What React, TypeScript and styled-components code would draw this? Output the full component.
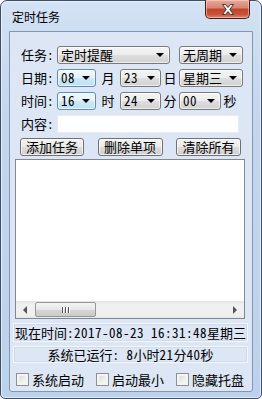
import styled, { createGlobalStyle } from "styled-components";

const GlobalStyle = createGlobalStyle`
    html, body {
        margin: 0;
        padding: 0;
        background: #ffffff;
    }
    * {
        box-sizing: border-box;
    }
`;

const uiFont = `"Noto Sans Mono CJK SC", "Noto Sans CJK SC", sans-serif`;

const Window = styled.div`
    width: 262px;
    height: 399px;
    border: 1px solid #3d4f66;
    border-radius: 7px 7px 5px 5px;
    background: linear-gradient(180deg, #d3e2f4 0%, #c3d6ee 30%, #bcd1eb 100%);
    box-shadow: inset 0 0 0 1px rgba(255, 255, 255, 0.55);
    padding: 0 8px 6px 8px;
    display: flex;
    flex-direction: column;
    font-family: ${uiFont};
    font-size: 13px;
    color: #000;
`;

const TitleBar = styled.div`
    height: 30px;
    display: flex;
    align-items: flex-start;
    justify-content: space-between;
`;

const Title = styled.div`
    font-family: "Noto Sans CJK SC", sans-serif;
    font-size: 12px;
    line-height: 14px;
    margin-top: 9px;
    margin-left: 3px;
    color: #000;
`;

const CloseButton = styled.div`
    width: 45px;
    height: 19px;
    margin-right: 3px;
    margin-top: -1px;
    border: 1px solid #4a1d16;
    border-top: none;
    border-radius: 0 0 5px 5px;
    background: linear-gradient(180deg, #e9a99b 0%, #d9826f 45%, #c0432a 50%, #c9533a 80%, #dd8a6f 100%);
    box-shadow: inset 0 0 0 1px rgba(255, 220, 210, 0.5);
    display: flex;
    align-items: center;
    justify-content: center;
`;

const Client = styled.div`
    flex: 1;
    border: 1px solid #8497b0;
    border-radius: 0 0 3px 3px;
    background: #dce6f4;
    padding: 14px 0 5px 0;
    display: flex;
    flex-direction: column;
`;

const FormRow = styled.div<{ $mt?: number }>`
    display: flex;
    align-items: center;
    height: 18px;
    margin-top: ${(p) => p.$mt ?? 5}px;
    padding-left: 11px;
`;

const Label = styled.div`
    width: 36px;
    line-height: 18px;
    white-space: nowrap;
`;

const Unit = styled.div<{ $w: number }>`
    width: ${(p) => p.$w}px;
    text-align: center;
    line-height: 18px;
`;

// half-width digits of the old bitmap font are a touch wider
const Num = styled.span`
    letter-spacing: 0.5px;
`;

const Combo = styled.div<{ $w: number; $hot?: boolean; $ml?: number }>`
    width: ${(p) => p.$w}px;
    height: 18px;
    margin-left: ${(p) => p.$ml ?? 0}px;
    border: 1px solid ${(p) => (p.$hot ? "#5a8fb9" : "#7a7a7a")};
    border-radius: 3px;
    background: ${(p) =>
        p.$hot
            ? "linear-gradient(180deg, #f1f8fd 0%, #e3f2fb 50%, #cfe8f7 51%, #bfe0f4 100%)"
            : "linear-gradient(180deg, #f4f4f4 0%, #ececec 50%, #dedede 51%, #d2d2d2 100%)"};
    box-shadow: inset 0 0 0 1px rgba(255, 255, 255, 0.6);
    display: flex;
    align-items: center;
    justify-content: space-between;
    padding: 0 5px 0 3px;
    line-height: 16px;
    white-space: nowrap;
`;

const Arrow = styled.span`
    width: 0;
    height: 0;
    border-left: 4px solid transparent;
    border-right: 4px solid transparent;
    border-top: 4px solid #000;
    flex-shrink: 0;
`;

const TextInput = styled.div`
    width: 182px;
    height: 18px;
    background: #ffffff;
    border: 1px solid #e6ecf4;
`;

const ButtonRow = styled.div`
    display: flex;
    justify-content: space-between;
    height: 18px;
    margin-top: 5px;
    padding: 0 11px 0 10px;
`;

const Button = styled.div<{ $w: number }>`
    width: ${(p) => p.$w}px;
    height: 18px;
    border: 1px solid #707070;
    border-radius: 3px;
    background: linear-gradient(180deg, #f3f3f3 0%, #ebebeb 50%, #dddddd 51%, #cfcfcf 100%);
    box-shadow: inset 0 0 0 1px rgba(255, 255, 255, 0.7);
    text-align: center;
    line-height: 16px;
    white-space: nowrap;
`;

const ListBox = styled.div`
    width: 230px;
    height: 160px;
    margin: 3px 0 0 5px;
    border: 1px solid #828790;
    background: #ffffff;
    display: flex;
    flex-direction: column;
    justify-content: flex-end;
`;

const HScroll = styled.div`
    height: 17px;
    background: linear-gradient(180deg, #e3e3e3 0%, #f0f0f0 20%, #f0f0f0 80%, #e8e8e8 100%);
    display: flex;
    align-items: center;
    padding: 0 7px;
`;

const ScrollArrow = styled.span<{ $dir: "left" | "right" }>`
    width: 0;
    height: 0;
    border-top: 4px solid transparent;
    border-bottom: 4px solid transparent;
    ${(p) =>
        p.$dir === "left" ? "border-right: 4px solid #555;" : "border-left: 4px solid #555;"}
`;

const ScrollTrack = styled.div`
    flex: 1;
    height: 100%;
    display: flex;
    align-items: center;
    padding-left: 8px;
`;

const Thumb = styled.div`
    width: 61px;
    height: 15px;
    border: 1px solid #979797;
    border-radius: 2px;
    background: linear-gradient(180deg, #f4f4f4 0%, #e7e7e7 50%, #d6d6d6 51%, #cbcbcb 100%);
    display: flex;
    align-items: center;
    justify-content: center;
    gap: 1px;
`;

const Grip = styled.span`
    width: 1px;
    height: 6px;
    background: #555;
    box-shadow: 1px 0 0 #fff;
    margin-right: 1px;
`;

const StatusBox = styled.div<{ $h: number; $mt: number }>`
    height: ${(p) => p.$h}px;
    margin: ${(p) => p.$mt}px 4px 0 3px;
    border: 1px solid #f3f7fc;
    box-shadow: inset 0 0 0 1px #d0dbea;
    display: flex;
    align-items: center;
    justify-content: center;
    white-space: nowrap;
    line-height: 16px;
`;

const CheckRow = styled.div`
    display: flex;
    align-items: center;
    height: 13px;
    margin-top: 10px;
    padding-left: 6px;
`;

const CheckItem = styled.div<{ $w: number }>`
    width: ${(p) => p.$w}px;
    display: flex;
    align-items: center;
    gap: 3px;
    white-space: nowrap;
    line-height: 15px;
`;

const Box = styled.span`
    width: 13px;
    height: 13px;
    border: 1px solid #8e8f8f;
    background: linear-gradient(135deg, #d6d6d6 0%, #f0f0f0 60%, #fbfbfb 100%);
    box-shadow: inset 0 0 0 2px #f4f4f4;
    flex-shrink: 0;
`;

const App = () => {
    return (
        <>
            <GlobalStyle />
            <Window>
                <TitleBar>
                    <Title>定时任务</Title>
                    <CloseButton>
                        <svg width="14" height="11" viewBox="0 0 14 11">
                            <path
                                d="M1.5 0.5 L4.5 0.5 L7 3.5 L9.5 0.5 L12.5 0.5 L8.8 5.5 L12.5 10.5 L9.5 10.5 L7 7.5 L4.5 10.5 L1.5 10.5 L5.2 5.5 Z"
                                fill="#ffffff"
                                stroke="#3a3a3a"
                                strokeWidth="1"
                                strokeLinejoin="round"
                            />
                        </svg>
                    </CloseButton>
                </TitleBar>
                <Client>
                    <FormRow $mt={0}>
                        <Label>任务:</Label>
                        <Combo $w={113}>
                            <span>定时提醒</span>
                            <Arrow />
                        </Combo>
                        <Combo $w={64} $ml={9}>
                            <span>无周期</span>
                            <Arrow />
                        </Combo>
                    </FormRow>
                    <FormRow>
                        <Label>日期:</Label>
                        <Combo $w={39} $hot>
                            <Num>08</Num>
                            <Arrow />
                        </Combo>
                        <Unit $w={24}>月</Unit>
                        <Combo $w={41}>
                            <Num>23</Num>
                            <Arrow />
                        </Combo>
                        <Unit $w={18}>日</Unit>
                        <Combo $w={64}>
                            <span>星期三</span>
                            <Arrow />
                        </Combo>
                    </FormRow>
                    <FormRow>
                        <Label>时间:</Label>
                        <Combo $w={39} $hot>
                            <Num>16</Num>
                            <Arrow />
                        </Combo>
                        <Unit $w={24}>时</Unit>
                        <Combo $w={41}>
                            <Num>24</Num>
                            <Arrow />
                        </Combo>
                        <Unit $w={18}>分</Unit>
                        <Combo $w={42}>
                            <Num>00</Num>
                            <Arrow />
                        </Combo>
                        <Unit $w={18}>秒</Unit>
                    </FormRow>
                    <FormRow>
                        <Label>内容:</Label>
                        <TextInput />
                    </FormRow>
                    <ButtonRow>
                        <Button $w={64}>添加任务</Button>
                        <Button $w={65}>删除单项</Button>
                        <Button $w={65}>清除所有</Button>
                    </ButtonRow>
                    <ListBox>
                        <HScroll>
                            <ScrollArrow $dir="left" />
                            <ScrollTrack>
                                <Thumb>
                                    <Grip />
                                    <Grip />
                                    <Grip />
                                </Thumb>
                            </ScrollTrack>
                            <ScrollArrow $dir="right" />
                        </HScroll>
                    </ListBox>
                    <StatusBox $h={19} $mt={4}>
                        现在时间<Num>:2017-08-23 16:31:48</Num>星期三
                    </StatusBox>
                    <StatusBox $h={17} $mt={4}>
                        系统已运行<Num>: 8</Num>小时<Num>21</Num>分<Num>40</Num>秒
                    </StatusBox>
                    <CheckRow>
                        <CheckItem $w={80}>
                            <Box />
                            系统启动
                        </CheckItem>
                        <CheckItem $w={80}>
                            <Box />
                            启动最小
                        </CheckItem>
                        <CheckItem $w={75}>
                            <Box />
                            隐藏托盘
                        </CheckItem>
                    </CheckRow>
                </Client>
            </Window>
        </>
    );
};

export default App;
